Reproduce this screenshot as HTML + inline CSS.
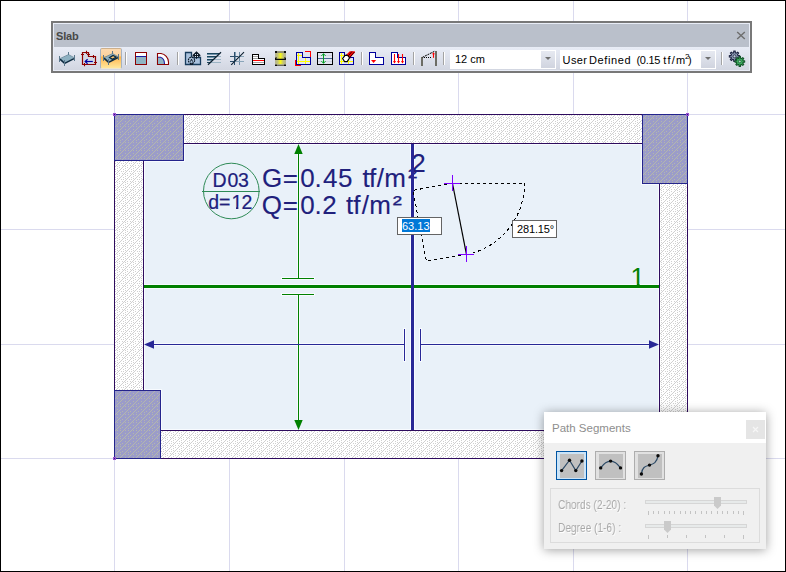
<!DOCTYPE html>
<html>
<head>
<meta charset="utf-8">
<title>Slab</title>
<style>
html,body{margin:0;padding:0;background:#fff;}
body{width:786px;height:572px;overflow:hidden;position:relative;font-family:"Liberation Sans",sans-serif;}
#frame{position:absolute;left:0;top:0;width:786px;height:572px;box-sizing:border-box;border:1px solid #000;pointer-events:none;z-index:50;}
#cad{position:absolute;left:0;top:0;}
.abs{position:absolute;}
/* toolbar */
#tb{position:absolute;left:51px;top:21px;width:701px;height:52px;box-sizing:border-box;border:2px solid #787878;background:#e9edf7;}
#tb .title{position:absolute;left:1px;top:1px;width:695px;height:23px;background:#bac0cb;}
#tb .title span{position:absolute;left:2px;top:6px;font-size:11px;font-weight:bold;color:#484848;line-height:12px;letter-spacing:-0.2px;}
#tb .row{position:absolute;left:1px;top:24px;width:695px;height:23px;background:linear-gradient(#e8ecf6,#d2d6e1);}
.sep{position:absolute;top:52px;width:1px;height:13px;background:#a3a3a3;box-shadow:1px 0 0 #fff;}
.combo{position:absolute;top:50px;height:19px;background:#fff;font-size:11px;line-height:19px;color:#000;white-space:pre;}
.combo .dd{position:absolute;right:1px;top:1px;width:14px;height:17px;background:linear-gradient(#e6e9f1,#d0d4df);}
.combo .dd:after{content:"";position:absolute;left:4px;top:6px;border:3px solid transparent;border-top:3px solid #707070;border-bottom:0;}
.hot{position:absolute;left:100px;top:48px;width:22px;height:21px;box-sizing:border-box;border:1px solid;border-color:#cdb08c #a7b2c0 #efe6cc #a7b2c0;border-radius:2px;background:linear-gradient(#fcdab0 0%,#fdd29c 36%,#ffb548 42%,#ffc566 60%,#ffe79c 100%);}
/* panel */
#panel{position:absolute;left:544px;top:412px;width:222px;height:137px;background:#f0f0f0;box-shadow:0 1px 10px rgba(0,0,0,.38);}
#panel .pt{position:absolute;left:0;top:0;width:222px;height:31px;background:#fff;}
#panel .pt span{position:absolute;left:8px;top:8.5px;font-size:11.5px;line-height:14px;color:#8e8e8e;}
#panel .close{position:absolute;left:202px;top:8px;width:19px;height:19px;background:#e5e5e5;}
.pb{position:absolute;top:39px;width:31px;height:29px;box-sizing:border-box;border:1px solid #adadad;background:#e1e1e1;}
.pb i{position:absolute;left:3px;top:2px;width:24px;height:24px;background:#c0c0c0;}
.pb.sel{border-color:#0055a3;background:#cce4f7;}
.grp{position:absolute;left:6px;top:76px;width:210px;height:55px;box-sizing:border-box;border:1px solid #dcdcdc;}
.lbl{position:absolute;left:13.8px;will-change:transform;font-size:12px;line-height:14px;color:#a8a8a8;text-shadow:1px 1px 0 #fff;transform:scaleX(.845);transform-origin:0 0;white-space:pre;}
.trk{position:absolute;left:101px;width:102px;height:4px;box-sizing:border-box;border:1px solid #d6d6d6;background:#e7eaea;}
.thumb{position:absolute;width:7px;height:12px;background:#cacaca;clip-path:polygon(0 0,100% 0,100% 70%,50% 100%,0 70%);}
.ibox{position:absolute;box-sizing:border-box;border:1px solid #646464;background:#fff;font-size:11px;line-height:16px;color:#000;white-space:pre;}
</style>
</head>
<body>
<svg id="cad" width="786" height="572" viewBox="0 0 786 572">
  <defs>
    <pattern id="hw" x="1" y="1" width="8" height="8" patternUnits="userSpaceOnUse">
      <path fill="#d0d0d0" shape-rendering="crispEdges" d="M7 0h1v1h-1zM6 1h1v1h-1zM5 2h1v1h-1zM4 3h1v1h-1zM3 4h1v1h-1zM2 5h1v1h-1zM1 6h1v1h-1zM0 7h1v1h-1zM2 0h1v1h-1zM4 1h1v1h-1zM0 2h1v1h-1zM2 2h1v1h-1zM1 4h1v1h-1zM6 4h1v1h-1zM4 5h1v1h-1zM6 6h1v1h-1zM4 7h1v1h-1z"/>
    </pattern>
    <pattern id="hc" x="0" y="0" width="8" height="8" patternUnits="userSpaceOnUse">
      <path fill="#b4b7ac" shape-rendering="crispEdges" d="M1 0h1v1h-1zM0 1h1v1h-1zM7 2h1v1h-1zM6 3h1v1h-1zM5 4h1v1h-1zM4 5h1v1h-1zM3 6h1v1h-1zM2 7h1v1h-1zM2 3h1v1h-1zM0 4h1v1h-1zM5 6h1v1h-1zM0 6h1v1h-1zM5 1h1v1h-1z"/>
    </pattern>
    <clipPath id="c1a"><rect x="229" y="188" width="14" height="18.8"/><rect x="236" y="206.7" width="2.4" height="2.5"/></clipPath>
    <clipPath id="c1b"><rect x="628" y="260" width="18" height="23.8"/><rect x="636.8" y="283.6" width="2.8" height="3"/></clipPath>
  </defs>
  <!-- grid -->
  <g fill="#dadaee" shape-rendering="crispEdges">
    <rect x="114" y="0" width="1" height="572"/><rect x="229" y="0" width="1" height="572"/>
    <rect x="344" y="0" width="1" height="572"/><rect x="458" y="0" width="1" height="572"/>
    <rect x="573" y="0" width="1" height="572"/><rect x="687" y="0" width="1" height="572"/>
    <rect x="0" y="114" width="786" height="1"/><rect x="0" y="229" width="786" height="1"/>
    <rect x="0" y="344" width="786" height="1"/><rect x="0" y="458" width="786" height="1"/>
  </g>
  <!-- walls -->
  <g shape-rendering="crispEdges">
    <rect x="114" y="114" width="574" height="345" fill="#fff"/>
    <rect x="114" y="114" width="574" height="345" fill="url(#hw)"/>
    <rect x="114.5" y="114.5" width="573" height="344" fill="none" stroke="#2e0b5e"/>
    <rect x="143.5" y="143.5" width="516" height="287" fill="#e9f1f9" stroke="#2e0b5e"/>
    <!-- columns -->
    <g stroke="#24248c">
      <rect x="114.5" y="114.5" width="69" height="46" fill="#9b9cc9"/>
      <rect x="642.5" y="114.5" width="45" height="69" fill="#9b9cc9"/>
      <rect x="114.5" y="390.5" width="46" height="68" fill="#9b9cc9"/>
    </g>
    <rect x="115" y="115" width="68" height="45" fill="url(#hc)"/>
    <rect x="643" y="115" width="44" height="68" fill="url(#hc)"/>
    <rect x="115" y="391" width="45" height="67" fill="url(#hc)"/>
    <g fill="#9b4fd0">
      <rect x="113" y="113" width="3" height="3"/><rect x="686" y="113" width="3" height="3"/><rect x="113" y="457" width="3" height="3"/>
    </g>
    <g fill="#2a1a8a">
      <rect x="114" y="114" width="1" height="1"/><rect x="687" y="114" width="1" height="1"/><rect x="114" y="458" width="1" height="1"/>
    </g>
  </g>
  <!-- edge halos -->
  <g shape-rendering="crispEdges" fill="#f7fbff">
    <path d="M184.5 144.5 H641.5 V184.5 H658.5 V429.5 H161.5 V389.5 H144.5 V161.5 H184.5 Z" fill="none" stroke="#f7fbff" stroke-width="1"/>
    <rect x="145" y="284" width="513" height="5"/>
    <rect x="410" y="145" width="5" height="284"/>
    <rect x="297" y="154" width="3" height="125"/><rect x="297" y="294" width="3" height="126"/>
    <rect x="281" y="277" width="34" height="3"/><rect x="281" y="293" width="34" height="3"/>
    <rect x="154" y="343" width="252" height="3"/><rect x="419" y="343" width="230" height="3"/>
    <rect x="403" y="328" width="3" height="34"/><rect x="419" y="328" width="3" height="34"/>
  </g>
  <!-- slab label -->
  <circle cx="231.3" cy="191" r="27.8" fill="none" stroke="#2f8b57" stroke-width="1"/>
  <rect x="202" y="191" width="58" height="1" fill="#2f8b57" shape-rendering="crispEdges"/>
  <g fill="#20207c" stroke="#20207c" stroke-width="0.12" font-family="'Liberation Sans',sans-serif">
    <text y="186.8" font-size="19.5" stroke-width="0.2" x="212.4 227.5 238">D03</text>
    <text y="208.8" font-size="19.5" stroke-width="0.2" x="208.2 219">d=</text>
    <text y="208.8" font-size="19.5" stroke-width="0.2" x="231.4" clip-path="url(#c1a)">1</text>
    <text y="208.8" font-size="19.5" stroke-width="0.2" x="241.6">2</text>
    <text y="186.6" font-size="26" x="262 282.7 300.3 314.6 323 338.1 352.5 362.6 369 376.7 384.2">G=0.45 tf/m</text>
    <text transform="translate(407.9 183.8) scale(1.25 1)" font-size="22" stroke-width="0.25">²</text>
    <text y="213.6" font-size="26" x="261.7 282.7 300.3 314.6 322.3 337 346 353.3 361.8 369.3">Q=0.2 tf/m</text>
    <text transform="translate(392.8 210.8) scale(1.25 1)" font-size="22" stroke-width="0.25">²</text>
    <text x="411.3" y="171.8" font-size="26">2</text>
  </g>
  <text x="630.6" y="286" font-size="25.5" fill="#008000" clip-path="url(#c1b)" font-family="'Liberation Sans',sans-serif">1</text>
  <!-- green axis + dim -->
  <g fill="#008000" shape-rendering="crispEdges">
    <rect x="144" y="285" width="515" height="3"/>
    <rect x="298" y="150" width="1" height="129"/>
    <rect x="298" y="294" width="1" height="130"/>
    <rect x="282" y="278" width="32" height="1"/>
    <rect x="282" y="294" width="32" height="1"/>
  </g>
  <g fill="#008000">
    <path d="M298.5 144 L302.7 154 L294.3 154 Z"/>
    <path d="M298.5 430 L302.7 420 L294.3 420 Z"/>
  </g>
  <!-- blue axis + dim -->
  <g fill="#282896" shape-rendering="crispEdges">
    <rect x="411" y="144" width="3" height="286"/>
    <rect x="150" y="344" width="255" height="1"/>
    <rect x="420" y="344" width="233" height="1"/>
    <rect x="404" y="329" width="1" height="32"/>
    <rect x="420" y="329" width="1" height="32"/>
  </g>
  <g fill="#282896">
    <path d="M144 344.5 L154 340.3 L154 348.7 Z"/>
    <path d="M659 344.5 L649 340.3 L649 348.7 Z"/>
  </g>
  <!-- rubber band -->
  <g fill="none" stroke="#000" stroke-width="1" stroke-dasharray="3 3" shape-rendering="crispEdges">
    <path d="M452.5 183.5 H524.5 A72.6 72.6 0 0 1 466.5 254.6"/>
    <path d="M452.5 183.5 L413 190.3 L426.4 261.3 L466.5 254.6"/>
  </g>
  <path d="M452.5 183.5 L466.5 254.6" stroke="#000" stroke-width="1.2" fill="none"/>
  <g fill="#7f00ff" shape-rendering="crispEdges">
    <rect x="444" y="183" width="16" height="1"/><rect x="452" y="175" width="1" height="16"/>
    <rect x="458" y="254" width="16" height="1"/><rect x="466" y="246" width="1" height="16"/>
  </g>
</svg>

<!-- input boxes -->
<div class="ibox" style="left:397px;top:217px;width:45px;height:18px;"><span style="position:absolute;left:4px;top:1px;width:28px;height:13px;line-height:14px;background:#0078d7;color:#fff;">63.13</span></div>
<div class="ibox" style="left:512px;top:220px;width:45px;height:18px;"><span style="position:absolute;left:4px;top:0px;line-height:16px;letter-spacing:-0.15px;">281.15°</span></div>

<!-- toolbar -->
<div id="tb">
  <div class="title"><span>Slab</span></div>
  <div class="row"></div>
</div>
<svg class="abs" style="left:736px;top:31px" width="10" height="9" viewBox="0 0 10 9"><path d="M1.2 1 L8.8 8 M8.8 1 L1.2 8" stroke="#6e6e6e" stroke-width="1.4" fill="none"/></svg>
<div class="hot"></div>
<div class="sep" style="left:125px"></div>
<div class="sep" style="left:177px"></div>
<div class="sep" style="left:361px"></div>
<div class="sep" style="left:413px"></div>
<div class="sep" style="left:443px"></div>
<div class="sep" style="left:721px"></div>
<div class="combo" style="left:450px;width:106px;"><span style="position:absolute;left:5px;top:0px;">12 cm</span><div class="dd"></div></div>
<div class="combo" style="left:560px;width:156px;"><span style="position:absolute;left:2.6px;top:1px;letter-spacing:0.4px">User</span><span style="position:absolute;left:29px;top:1px;letter-spacing:0.6px">Defined</span><span style="position:absolute;left:76.5px;top:1px;letter-spacing:-0.3px">(0.15</span><span style="position:absolute;left:103.3px;top:1px;letter-spacing:1.2px">tf/m</span><span style="position:absolute;left:125px;top:-3px;font-size:8px;">2</span><span style="position:absolute;left:128px;top:1px;">)</span><div class="dd"></div></div>
<svg id="icons" class="abs" style="left:0;top:44px" width="786" height="30" viewBox="0 44 786 30">
<g transform="translate(0 0)"><path d="M60 59 L68.5 54.8 L74 58 L65 62.6 Z" fill="#8db0c1"/><path d="M60 59.2 L64.6 63.4 L74 58.6" fill="none" stroke="#0c2a40" stroke-width="1.6"/><path d="M60 58.6 L68.5 54.6 L74 57.6" fill="none" stroke="#5f8396" stroke-width="0.8"/><g fill="#5b788c" shape-rendering="crispEdges"><rect x="59" y="56" width="1" height="6"/><rect x="68" y="52" width="1" height="3"/><rect x="74" y="55" width="1" height="6"/><rect x="64" y="60" width="1" height="6"/></g></g>
<g>
<path d="M82.5 52.5 H88.5 V56.5 H95.5 V64.5 H82.5 Z" fill="#d3d7e3" stroke="#8e0000" stroke-width="1.2"/>
<path d="M81 54.5 H84 M86.5 50.8 V54 M87 54.5 H90 M88.5 53 V56 M93.5 55 V58 M94 62.5 H97 M84.5 63 V66.2" stroke="#8e0000" stroke-width="1.1" fill="none"/>
<path d="M92.8 61.5 H85.6" stroke="#0000a0" stroke-width="1.2" fill="none"/>
<path d="M87.6 59.3 L85.2 61.5 L87.6 63.7" stroke="#0000a0" stroke-width="1.2" fill="none"/>
</g>
<g transform="translate(44 -1)"><path d="M60 59 L68.5 54.8 L74 58 L65 62.6 Z" fill="#8db0c1"/><path d="M60 59.2 L64.6 63.4 L74 58.6" fill="none" stroke="#0c2a40" stroke-width="1.6"/><path d="M60 58.6 L68.5 54.6 L74 57.6" fill="none" stroke="#5f8396" stroke-width="0.8"/><path d="M65.6 58.6 L69 56.4 L72 58 L68.6 60.4 Z" fill="#ffc870" stroke="#0c2a40" stroke-width="1.3"/><g fill="#5b788c" shape-rendering="crispEdges"><rect x="59" y="56" width="1" height="6"/><rect x="68" y="52" width="1" height="3"/><rect x="74" y="55" width="1" height="6"/><rect x="64" y="60" width="1" height="6"/></g></g>
<g shape-rendering="crispEdges">
<rect x="135.5" y="52.5" width="11" height="12" fill="#fff" stroke="#8b0000"/>
<rect x="136" y="57" width="10" height="7" fill="#8fb4c3"/>
<rect x="136" y="56" width="10" height="1" fill="#1a1aa0"/>
</g>
<g>
<path d="M157.5 53.5 H161 C165 54 168.5 58 168.5 62 V64.5 H157.5 Z" fill="#fff" stroke="#8b0000" stroke-width="1.1"/>
<path d="M158 57.5 H160.5 C163 58 164.5 60.5 164.5 64 H158 Z" fill="#8fb4c3"/>
<path d="M158 57.3 H160.5 C163 58 164.5 60.5 164.5 64" fill="none" stroke="#1a1aa0" stroke-width="1.1"/>
</g>
<g>
<path d="M185.5 52.5 H191.5 V57.5 H200.5 V64.5 H185.5 Z" fill="#a9c1dd" stroke="#173b5c" stroke-width="1.3"/>
<circle cx="191.5" cy="60.3" r="3.1" fill="#a9c1dd" stroke="#0c1826" stroke-width="1.2" stroke-dasharray="1.7 0.7"/>
<path d="M190.4 61.6 L191.5 59.2 L192.6 61.6" fill="none" stroke="#0c1826" stroke-width="1"/>
<rect x="190" y="63.4" width="3" height="1.4" fill="#0c1826"/>
<path d="M196.5 51.3 L200.4 55 V56 L197.4 57.6 L196.5 59.3 L195.6 57.6 L192.6 56 V55 Z" fill="#0c1826"/>
<g fill="#d8e2ee"><rect x="195" y="54" width="1" height="1"/><rect x="197" y="54" width="1" height="1"/><rect x="195" y="56" width="1" height="1"/><rect x="197" y="56" width="1" height="1"/></g>
</g>
<g>
<g shape-rendering="crispEdges">
<rect x="207" y="53" width="13" height="1" fill="#1c455c"/><rect x="207" y="54" width="11" height="1" fill="#6f93ab"/>
<rect x="207" y="56" width="9" height="1" fill="#1c455c"/><rect x="207" y="57" width="8" height="1" fill="#6f93ab"/><rect x="216" y="56" width="5" height="1" fill="#9bb4c4"/>
<rect x="207" y="59" width="6" height="1" fill="#1c455c"/><rect x="207" y="60" width="5" height="1" fill="#6f93ab"/><rect x="213" y="59" width="8" height="1" fill="#9bb4c4"/>
<rect x="207" y="62" width="3" height="1" fill="#1c455c"/><rect x="210" y="62" width="11" height="1" fill="#9bb4c4"/>
</g>
<path d="M221 52.3 L208 64.7" stroke="#0c2030" stroke-width="1.2" fill="none"/>
</g>
<g>
<g shape-rendering="crispEdges">
<rect x="234" y="52" width="1" height="13" fill="#2c4e6c"/><rect x="235" y="52" width="1" height="9" fill="#7f9db4"/>
<rect x="239" y="52" width="1" height="13" fill="#6d8ba3"/>
<rect x="230" y="56" width="8" height="1" fill="#2c4e6c"/><rect x="238" y="56" width="6" height="1" fill="#8aa5b9"/>
<rect x="230" y="61" width="4" height="1" fill="#2c4e6c"/><rect x="234" y="61" width="10" height="1" fill="#8aa5b9"/>
</g>
<path d="M244 52.2 L231.2 64.8" stroke="#0c2030" stroke-width="1.1" fill="none"/>
</g>
<g shape-rendering="crispEdges">
<path d="M252.5 54.5 H258.5 V58.5 H264.5 V64.5 H252.5 Z" fill="#fff" stroke="#000" stroke-width="1"/>
<rect x="253" y="56" width="5" height="1" fill="#a0a0a0"/>
<rect x="253" y="58" width="5" height="1" fill="#a0a0a0"/>
<rect x="253" y="60" width="11" height="1" fill="#ff0000"/>
<rect x="253" y="62" width="11" height="1" fill="#a0a0a0"/>
</g>
<g>
<defs><linearGradient id="yg" x1="0" y1="0" x2="1" y2="0"><stop offset="0" stop-color="#b2b296"/><stop offset="0.22" stop-color="#c0c07c"/><stop offset="0.5" stop-color="#f6f61c"/><stop offset="0.78" stop-color="#c0c07c"/><stop offset="1" stop-color="#b2b296"/></linearGradient></defs>
<rect x="275" y="51" width="11" height="15" fill="url(#yg)"/>
<rect x="275" y="51" width="11" height="2" fill="#a4a48c" opacity="0.85"/><rect x="275" y="64" width="11" height="2" fill="#a4a48c" opacity="0.85"/>
<rect x="277" y="51.6" width="7" height="1" fill="#7c7c6c"/><rect x="277" y="65" width="7" height="1" fill="#6a6a5c"/>
<g fill="#111"><rect x="275" y="51" width="2" height="2"/><rect x="284" y="51" width="2" height="2"/><rect x="275" y="64.6" width="2" height="1.4"/><rect x="284" y="64.6" width="2" height="1.4"/></g>
<path d="M276.5 57.5 L275.6 58.4 V59.4 H285.4 V58.4 L284.5 57.5" fill="none" stroke="#0a0a0a" stroke-width="1.2" stroke-linejoin="round"/>
</g>
<g shape-rendering="crispEdges">
<path d="M296.5 52.5 H302.5 V57.5 H310.5 V64.5 H296.5 Z" fill="#e4e6f4" stroke="#00009c" stroke-width="1"/>
<g fill="#ffff00"><rect x="298" y="53" width="1" height="11"/><rect x="297" y="55" width="5" height="1"/><rect x="297" y="61" width="13" height="1"/><rect x="305" y="58" width="1" height="6"/></g>
<path d="M305 51.5 H310.5 V57" fill="none" stroke="#ff0000" stroke-width="1"/>
<path d="M295.5 60 V65.5 H301" fill="none" stroke="#ff0000" stroke-width="1"/>
</g>
<g>
<rect x="317.5" y="52.5" width="15" height="12" fill="#e3e6f1" stroke="#000" stroke-width="1" shape-rendering="crispEdges"/>
<rect x="318" y="58" width="14" height="1" fill="#4a6a90" shape-rendering="crispEdges"/>
<rect x="318" y="55" width="14" height="1" fill="#d2d6e4" shape-rendering="crispEdges"/>
<rect x="318" y="61" width="14" height="1" fill="#d2d6e4" shape-rendering="crispEdges"/>
<path d="M323.5 54 V63" stroke="#00a020" stroke-width="1" fill="none"/>
<path d="M321.3 56 L323.5 53.6 L325.7 56 M321.3 61 L323.5 63.4 L325.7 61" stroke="#00a020" stroke-width="0.9" fill="none"/>
</g>
<g>
<g shape-rendering="crispEdges">
<path d="M339.5 52.5 H344.5 V57.5 H353.5 V64.5 H339.5 Z" fill="#e4e6f4" stroke="#00009c" stroke-width="1"/>
<g fill="#ffff00"><rect x="341" y="53" width="1" height="11"/><rect x="340" y="55" width="4" height="1"/><rect x="340" y="61" width="13" height="1"/><rect x="348" y="58" width="1" height="6"/></g>
</g>
<path d="M342.6 58.6 L345 55.4 L347.6 55.4 L349.6 57.8 L347.2 61.6 L344.6 61.6 Z" fill="#fff" stroke="#000" stroke-width="1.1"/>
<path d="M346.6 54.6 L349.8 51.2 L354.8 51.2 L355 52.6 L350.4 57.6 Z" fill="#ff0000"/>
<path d="M348.2 56 L352 51.4 M350 57.2 L354.4 52 M346.4 54.4 L350.6 57.8" stroke="#1a0000" stroke-width="0.9" fill="none"/>
</g>
<g>
<path d="M369.5 52.5 H375.5 V57.5 H383.5 V64.5 H369.5 Z" fill="#fff" stroke="#00009c" stroke-width="1" shape-rendering="crispEdges"/>
<path d="M371 60 H376.2 L373.6 63 Z" fill="#ff0000"/>
</g>
<g>
<path d="M391.5 52.5 H397.5 V57.5 H405.5 V64.5 H391.5 Z" fill="#fff" stroke="#00009c" stroke-width="1" shape-rendering="crispEdges"/>
<g stroke="#ff0000" stroke-width="1.1" fill="none"><path d="M394.5 54 V63 M398.5 54 V63 M402.5 54 V63"/></g>
<g fill="#ff0000"><path d="M393 61 H396 L394.5 63.6 Z M397 61 H400 L398.5 63.6 Z M401 61 H404 L402.5 63.6 Z"/></g>
</g>
<g>
<g fill="#6c6c64" shape-rendering="crispEdges"><rect x="421" y="57" width="2" height="9"/><rect x="435" y="51" width="2" height="15"/></g>
<path d="M422.5 57.3 L434.5 51.3" stroke="#000" stroke-width="1" stroke-dasharray="2 0.8" fill="none"/>
<path d="M424 57.5 H432" stroke="#000" stroke-width="1" stroke-dasharray="1 1" fill="none"/>
<path d="M433.5 53 V57.8" stroke="#ff0000" stroke-width="1.1" fill="none"/>
<path d="M432 54.2 L433.5 52.2 L435 54.2 Z" fill="#ff0000"/>
</g>
<g><path d="M739.66 55.63 L739.66 56.97 L737.91 57.22 L737.56 58.07 L738.62 59.47 L737.67 60.42 L736.27 59.36 L735.42 59.71 L735.17 61.46 L733.83 61.46 L733.58 59.71 L732.73 59.36 L731.33 60.42 L730.38 59.47 L731.44 58.07 L731.09 57.22 L729.34 56.97 L729.34 55.63 L731.09 55.38 L731.44 54.53 L730.38 53.13 L731.33 52.18 L732.73 53.24 L733.58 52.89 L733.83 51.14 L735.17 51.14 L735.42 52.89 L736.27 53.24 L737.67 52.18 L738.62 53.13 L737.56 54.53 L737.91 55.38 Z" fill="#8c9ab4" stroke="#1c2240" stroke-width="1.1"/><circle cx="734.5" cy="56.3" r="1.5" fill="#c4d0dc" stroke="#1c2240" stroke-width="0.8"/><path d="M744.66 60.86 L744.66 62.14 L743.02 62.37 L742.69 63.16 L743.68 64.49 L742.79 65.38 L741.46 64.39 L740.67 64.72 L740.44 66.36 L739.16 66.36 L738.93 64.72 L738.14 64.39 L736.81 65.38 L735.92 64.49 L736.91 63.16 L736.58 62.37 L734.94 62.14 L734.94 60.86 L736.58 60.63 L736.91 59.84 L735.92 58.51 L736.81 57.62 L738.14 58.61 L738.93 58.28 L739.16 56.64 L740.44 56.64 L740.67 58.28 L741.46 58.61 L742.79 57.62 L743.68 58.51 L742.69 59.84 L743.02 60.63 Z" fill="#3fb863" stroke="#14552a" stroke-width="1.1"/><circle cx="739.8" cy="61.5" r="1.4" fill="#a8dcc0" stroke="#14552a" stroke-width="0.8"/></g>
</svg>

<!-- panel -->
<div id="panel">
  <div class="pt"><span>Path Segments</span></div>
  <div class="close"><svg width="19" height="19" viewBox="0 0 19 19"><path d="M7 7 L12 12 M12 7 L7 12" stroke="#f6f6f6" stroke-width="1.1" fill="none"/></svg></div>
  <div class="pb sel" style="left:12px"><i></i></div>
  <div class="pb" style="left:51px"><i></i></div>
  <div class="pb" style="left:90px"><i></i></div>
  <svg class="abs" style="left:0;top:0" width="222" height="137" viewBox="544 412 222 137">
    <g fill="none" stroke="#2c4a66" stroke-width="1.2">
      <path d="M561.6 470.6 L569.5 460.2 L575.8 470.6 L581.9 461"/>
      <path d="M600.7 467.9 Q610.6 454.5 620.5 467.9"/>
      <path d="M641.4 474 C642 466 647 466 649.5 465.1 C653 464 657 463 658 455.7"/>
    </g>
    <g fill="#0a0a0a">
      <circle cx="561.6" cy="470.6" r="1.7"/><circle cx="569.5" cy="460.2" r="1.7"/><circle cx="575.8" cy="470.6" r="1.7"/><circle cx="581.9" cy="461" r="1.7"/>
      <circle cx="600.7" cy="467.9" r="1.7"/><circle cx="610.6" cy="461.1" r="1.7"/><circle cx="620.5" cy="467.9" r="1.7"/>
      <circle cx="641.4" cy="474" r="1.7"/><circle cx="649.5" cy="465.1" r="1.7"/><circle cx="658" cy="455.7" r="1.7"/>
    </g>
  </svg>
  <div class="grp"></div>
  <div class="lbl" style="top:86px;">Chords (2-20) :</div>
  <div class="lbl" style="top:109px;">Degree (1-6) :</div>
  <div class="trk" style="top:88px"></div>
  <div class="trk" style="top:112px"></div>
  <div class="thumb" style="left:170px;top:85px"></div>
  <div class="thumb" style="left:120px;top:109px"></div>
  <svg class="abs" style="left:0;top:0" width="222" height="137" viewBox="544 412 222 137" shape-rendering="crispEdges">
    <g fill="#c3c3c3" id="ticks"><rect x="648" y="511" width="1" height="4"/><rect x="653" y="511" width="1" height="3"/><rect x="658" y="511" width="1" height="3"/><rect x="664" y="511" width="1" height="3"/><rect x="669" y="511" width="1" height="3"/><rect x="674" y="511" width="1" height="3"/><rect x="680" y="511" width="1" height="3"/><rect x="685" y="511" width="1" height="3"/><rect x="690" y="511" width="1" height="3"/><rect x="695" y="511" width="1" height="3"/><rect x="701" y="511" width="1" height="3"/><rect x="706" y="511" width="1" height="3"/><rect x="711" y="511" width="1" height="3"/><rect x="717" y="511" width="1" height="3"/><rect x="722" y="511" width="1" height="3"/><rect x="727" y="511" width="1" height="3"/><rect x="733" y="511" width="1" height="3"/><rect x="738" y="511" width="1" height="3"/><rect x="743" y="511" width="1" height="4"/><rect x="648" y="535" width="1" height="4"/><rect x="667" y="535" width="1" height="3"/><rect x="686" y="535" width="1" height="3"/><rect x="705" y="535" width="1" height="3"/><rect x="724" y="535" width="1" height="3"/><rect x="743" y="535" width="1" height="4"/></g>
  </svg>
</div>
<div id="frame"></div>
</body>
</html>
